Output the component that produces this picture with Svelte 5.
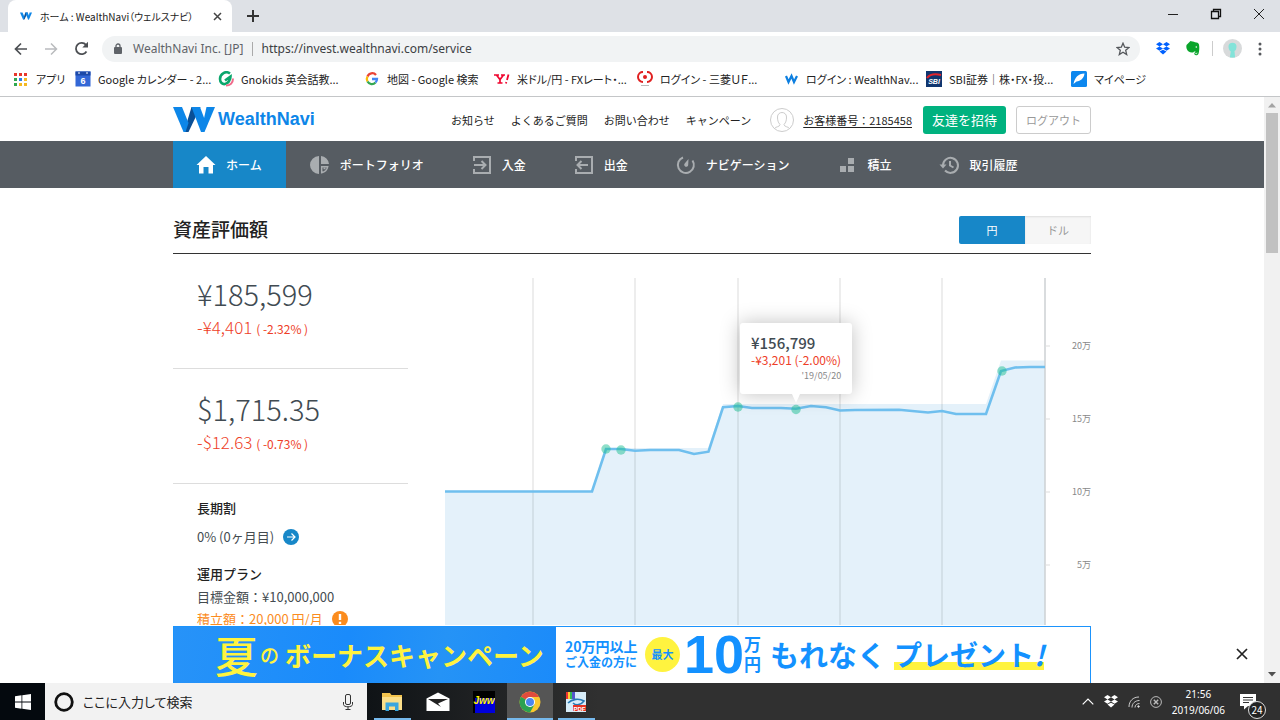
<script>
  let currency = $state('yen');

  const bookmarks = [
    { icon: 'apps', label: 'アプリ' },
    { icon: 'calendar', label: 'Google カレンダー - 2...' },
    { icon: 'gnokids', label: 'Gnokids 英会話教...' },
    { icon: 'google', label: '地図 - Google 検索' },
    { icon: 'yahoo', label: '米ドル/円 - FXレート・...' },
    { icon: 'mufg', label: 'ログイン - 三菱ＵＦ...' },
    { icon: 'wn', label: 'ログイン : WealthNav...' },
    { icon: 'sbi', label: 'SBI証券｜株・FX・投...' },
    { icon: 'feather', label: 'マイページ' }
  ];

  const menu = [
    { icon: 'home', label: 'ホーム', active: true },
    { icon: 'pie', label: 'ポートフォリオ' },
    { icon: 'in', label: '入金' },
    { icon: 'out', label: '出金' },
    { icon: 'gauge', label: 'ナビゲーション' },
    { icon: 'blocks', label: '積立' },
    { icon: 'history', label: '取引履歴' }
  ];

  const amounts = [
    { total: '¥185,599', diff: '-¥4,401', rate: '( -2.32% )' },
    { total: '$1,715.35', diff: '-$12.63', rate: '( -0.73% )' }
  ];

  // chart data in plot coordinates
  const gridX = [88, 190, 293, 395, 497];
  const ticks = [
    { y: 68, label: '20万' },
    { y: 141, label: '15万' },
    { y: 214, label: '10万' },
    { y: 287, label: '5万' }
  ];
  const value = [
    [0, 213.5], [147, 213.5], [161, 171], [176, 171], [190, 172.7], [205, 172], [234, 172],
    [249, 176], [263.5, 173.7], [278, 129.3], [293, 128], [307, 130], [336, 130], [351, 130.8],
    [366, 128], [381, 129.3], [395, 132.5], [410, 132], [454, 131.8], [483, 134.5], [497, 133],
    [511, 136], [541, 136], [556, 93], [570, 89.5], [585, 89], [600, 89]
  ];
  const principal = [
    [0, 213], [147, 213], [161, 170], [263, 170], [278, 126], [541, 126], [556, 82.5], [600, 82.5]
  ];
  const deposits = [[161, 171], [176, 172], [293, 129], [351, 131.5], [557, 93]];

  const toPoints = (list) => list.map((p) => p.join(',')).join(' ');
</script>

{#snippet wmark()}
  <svg class="wmark" viewBox="0 0 42 25" aria-hidden="true">
    <path d="M18.500 0h9L15.500 25H11z" fill="#0a4f96" />
    <path d="M0 0h9l6.500 16L12.500 25H10.500z" fill="#0d86e8" />
    <path d="M18.500 0h8.500l6 16L30 25h-2z" fill="#0d86e8" />
    <path d="M33.500 0H42L31.500 25H28z" fill="#0d86e8" />
  </svg>
{/snippet}

<div class="window">
  <header class="tabs">
    <div class="tab">
      {@render wmark()}
      <span class="tab-title">ホーム : WealthNavi（ウェルスナビ）</span>
      <button aria-label="タブを閉じる">
        <svg width="9" height="9" viewBox="0 0 9 9"><path d="M1 1l7 7M8 1L1 8" stroke="#444" stroke-width="1.500" /></svg>
      </button>
    </div>
    <button class="new-tab" aria-label="新しいタブ">
      <svg width="12" height="12" viewBox="0 0 12 12"><path d="M6 0v12M0 6h12" stroke="#333" stroke-width="2" /></svg>
    </button>
    <div class="window-buttons">
      <button aria-label="最小化"><svg width="12" height="12" viewBox="0 0 12 12"><path d="M1 6.500h10" stroke="#222" /></svg></button>
      <button aria-label="元に戻す">
        <svg width="12" height="12" viewBox="0 0 12 12"><path d="M1.500 3.500h7v7h-7zM3.500 3.500v-2h7v7h-2" fill="none" stroke="#111" stroke-width="1.300" /></svg>
      </button>
      <button aria-label="閉じる"><svg width="12" height="12" viewBox="0 0 12 12"><path d="M1 1l10 10M11 1L1 11" stroke="#222" /></svg></button>
    </div>
  </header>

  <div class="toolbar">
    <button aria-label="戻る">
      <svg width="14" height="14" viewBox="0 0 14 14"><path d="M13 7H2M7 1.500L1.500 7 7 12.500" fill="none" stroke="#4c4f53" stroke-width="1.700" /></svg>
    </button>
    <button aria-label="進む">
      <svg width="14" height="14" viewBox="0 0 14 14"><path d="M1 7h11M7 1.500L12.500 7 7 12.500" fill="none" stroke="#b9bbbe" stroke-width="1.500" /></svg>
    </button>
    <button aria-label="再読み込み">
      <svg width="15" height="15" viewBox="0 0 15 15"><path d="M12.500 10.500A5.700 5.700 0 1 1 12 3.800" fill="none" stroke="#4c4f53" stroke-width="1.800" /><path d="M14 .8v5.700H8.300z" fill="#4c4f53" /></svg>
    </button>
    <div class="omnibox">
      <svg width="8" height="11" viewBox="0 0 8 11"><rect y="4" width="8" height="7" rx="1" fill="#5f6368" /><path d="M2 4.500V3a2 2 0 0 1 4 0v1.500" fill="none" stroke="#5f6368" stroke-width="1.300" /></svg>
      <span class="site">WealthNavi Inc. [JP]</span>
      <input type="text" aria-label="アドレス" value="https://invest.wealthnavi.com/service" />
      <button aria-label="ブックマークに追加">
        <svg width="14" height="14" viewBox="0 0 14 14"><path d="M7 1.200l1.700 4 4.300.3-3.300 2.800 1 4.200L7 10.200l-3.700 2.300 1-4.200L1 5.500l4.300-.3z" fill="none" stroke="#55585c" stroke-width="1.300" /></svg>
      </button>
    </div>
    <div class="extensions">
      <button aria-label="Dropbox">
        <svg width="14" height="13" viewBox="0 0 14 13" fill="#0061fe"><path d="M3.500 0L7 2.200 3.500 4.400 0 2.200zM10.500 0L14 2.200l-3.500 2.200L7 2.200zM3.500 4.400L7 6.600 3.500 8.800 0 6.600zM10.500 4.400L14 6.600l-3.500 2.200L7 6.600zM3.500 9.600L7 7.700l3.500 1.900L7 12.500z" /></svg>
      </button>
      <button aria-label="Evernote">
        <svg width="14" height="15" viewBox="0 0 14 15"><path d="M4.500 0C5 .5 8 .3 9 1.200c2 .2 3.500.5 4 2.300.6 3 .3 7-.6 9.500-.8 1.500-3.400 1.800-4 .3-.4-1.500.4-2.500 1.800-2.300-1.200-.6-2.200-.8-3 .4-3 .4-5.700-.6-6.700-4.200C.3 6 .2 5 .5 4L4.500 0z" fill="#0aa52b" /><path d="M9.400 12.200c.2.900 1.600.7 1.600-.5" fill="none" stroke="#fff" /><circle cx="10.300" cy="6" r=".8" fill="#fff" /></svg>
      </button>
      <i></i>
      <button aria-label="プロフィール">
        <svg width="19" height="19" viewBox="0 0 19 19"><circle cx="9.500" cy="9.500" r="9.500" fill="#d8dadb" /><path d="M5.500 7c0-4.500 8-4.500 8 0 0 3-.7 4.500-2 5l.6 6.500H6.800l1-6C6 11.500 5.500 9.500 5.500 7z" fill="#83e3d9" /></svg>
      </button>
      <button aria-label="メニュー">
        <svg width="4" height="14" viewBox="0 0 4 14" fill="#55585c"><circle cx="2" cy="2" r="1.500" /><circle cx="2" cy="7" r="1.500" /><circle cx="2" cy="12" r="1.500" /></svg>
      </button>
    </div>
  </div>

  <nav class="bookmarks" aria-label="ブックマーク">
    {#each bookmarks as b}
      <a href="#{b.icon}">
        <svg width="16" height="16" viewBox="0 0 16 16" aria-hidden="true">
          {#if b.icon === 'apps'}
            {#each ['#e8372c', '#e8372c', '#e8372c', '#2fa84f', '#2b7de9', '#f5b921', '#2fa84f', '#f5b921', '#f5b921'] as color, i}
              <rect x={1 + (i % 3) * 5} y={2 + Math.floor(i / 3) * 5} width="3" height="3" fill={color} />
            {/each}
          {:else if b.icon === 'calendar'}
            <rect x=".5" y=".5" width="15" height="15" fill="#3367d6" />
            <path d="M.5.500h15v4H.5z" fill="#1c49a8" /><path d="M3 2h2M11 2h2" stroke="#fff" />
            <text x="8" y="12.500" text-anchor="middle" fill="#fff" font-size="9" font-weight="700">6</text>
          {:else if b.icon === 'gnokids'}
            <path d="M12 2.500C8-.5 2 2.500 2 8c0 3.500 2.500 5.500 5 5 3-.5 5.500-4 5.500-7.500L7 9.500" fill="none" stroke="#0aa66c" stroke-width="2.600" />
            <path d="M8 14.500c4 0 7-2.500 7-7" fill="none" stroke="#f06a8a" stroke-width="2" />
          {:else if b.icon === 'google'}
            <path d="M12 4A5 5 0 0 0 3.500 5.500" fill="none" stroke="#ea4335" stroke-width="2.300" />
            <path d="M3.500 5.500a5 5 0 0 0 0 5" fill="none" stroke="#fbbc05" stroke-width="2.300" />
            <path d="M3.500 10.500a5 5 0 0 0 8 1" fill="none" stroke="#34a853" stroke-width="2.300" />
            <path d="M8 8h5a5 5 0 0 1-1.500 3.500" fill="none" stroke="#4285f4" stroke-width="2.300" />
          {:else if b.icon === 'yahoo'}
            <path d="M0 4h5M7 4h4M2.500 4l3.500 4.500L9.500 4M6 8v4M3.500 12h5" stroke="#f0062f" stroke-width="1.700" fill="none" />
            <path d="M14.500 3.500L13 9M12.300 11l-.3 1.500" stroke="#f0062f" stroke-width="1.800" />
          {:else if b.icon === 'mufg'}
            <circle cx="8" cy="6" r="2" fill="#e02020" />
            <path d="M6 .9a5 5 0 0 0 0 10M10 .9a5 5 0 0 1 0 10" fill="none" stroke="#e02020" stroke-width="2" />
            <path d="M4 14.500h8" stroke="#bbb" />
          {:else if b.icon === 'wn'}
            <path d="M3 5l2.500 6L8.500 5l2.500 6 3-6" fill="none" stroke="#0d7fe0" stroke-width="2.200" />
          {:else if b.icon === 'sbi'}
            <rect width="16" height="16" fill="#10366f" />
            <path d="M1 7C4 3 9 2.500 15 4" fill="none" stroke="#e2232b" stroke-width="2" />
            <text x="8" y="13" text-anchor="middle" fill="#fff" font-size="7" font-weight="700" font-style="italic">SBI</text>
          {:else}
            <rect width="16" height="16" rx="1.500" fill="#0d87ee" />
            <path d="M2.500 13C4 6 7 3 13.500 2.500c-.5 5-4 7.500-8 8z" fill="#fff" />
          {/if}
        </svg>
        <span>{b.label}</span>
      </a>
    {/each}
  </nav>

  <div class="viewport">
    <div class="page">
      <header class="site-header">
        <div class="container">
          <a class="logo" href="#home">{@render wmark()}<span>WealthNavi</span></a>
          <nav class="links">
            <a href="#news">お知らせ</a>
            <a href="#faq">よくあるご質問</a>
            <a href="#contact">お問い合わせ</a>
            <a href="#campaign">キャンペーン</a>
          </nav>
          <a class="user" href="#account">
            <svg width="24" height="24" viewBox="0 0 24 24" fill="none" stroke="#ccc"><circle cx="12" cy="12" r="11.500" /><path d="M4.500 20.500c1-2 5.500-1.500 5.500-4C8 14.500 7.500 12 7.500 9c0-6 9-6 9 0 0 3-.5 5.500-2.500 7.500 0 2.500 4.500 2 5.500 4" /></svg>
            <span>お客様番号：2185458</span>
          </a>
          <button class="invite">友達を招待</button>
          <button class="logout">ログアウト</button>
        </div>
      </header>

      <nav class="menu">
        <div class="container">
          {#each menu as item}
            <a href="#{item.icon}" class:active={item.active}>
              <svg width="18" height="18" viewBox="0 0 18 18" fill="none" stroke="#a9adb0" stroke-width="2" aria-hidden="true">
                {#if item.icon === 'home'}
                  <path d="M9 0l9.500 9H16v8.500h-4.500V11h-5v6.500H2V9H-.5z" fill="#fff" stroke="none" />
                {:else if item.icon === 'pie'}
                  <path d="M8 0v18A9 9 0 0 1 8 0zM10 0a9 9 0 0 1 8 8h-8z" fill="#a9adb0" stroke="none" />
                  <path d="M10.700 10.700h6c-.6 3-3 5.500-6 6zM12.500 12.500h2" stroke-width="1.500" />
                {:else if item.icon === 'in'}
                  <path d="M1 5V1h16v16H1v-4M1 9h11M8.500 5l4 4-4 4" />
                {:else if item.icon === 'out'}
                  <path d="M1 5V1h16v16H1v-4M13 9H3M6.500 5l-4 4 4 4" />
                {:else if item.icon === 'gauge'}
                  <path d="M6 1.500A8 8 0 1 0 15.500 4.500" />
                  <path d="M11.500 3l-.3 6a2 2 0 1 1-3.500-1.500z" fill="#a9adb0" stroke="none" />
                {:else if item.icon === 'blocks'}
                  <path d="M10 2h6v6h-6zM2 10h6v6H2zM10 10h6v6h-6z" fill="#a9adb0" stroke="none" />
                {:else}
                  <path d="M3 9a7.500 7.500 0 1 1 2 5.500M10 5v4.500l3.500 2" />
                  <path d="M-.5 8.500h7L3 12.500z" fill="#a9adb0" stroke="none" />
                {/if}
              </svg>
              {item.label}
            </a>
          {/each}
        </div>
      </nav>

      <main class="container">
        <div class="section-head">
          <h1>資産評価額</h1>
          <div class="toggle">
            <button class:on={currency === 'yen'} onclick={() => (currency = 'yen')}>円</button>
            <button class:on={currency === 'dollar'} onclick={() => (currency = 'dollar')}>ドル</button>
          </div>
        </div>

        <div class="columns">
          <aside>
            {#each amounts as a}
              <section class="amount">
                <p class="total">{a.total}</p>
                <p class="diff">{a.diff} <small>{a.rate}</small></p>
              </section>
            {/each}
            <section class="plan">
              <h2>長期割</h2>
              <p class="discount">
                0% (0ヶ月目)
                <a href="#discount" aria-label="長期割の詳細">
                  <svg width="16" height="16" viewBox="0 0 16 16"><circle cx="8" cy="8" r="8" fill="#1787c8" /><path d="M4 8h8M8.500 4.500L12 8l-3.500 3.500" fill="none" stroke="#fff" stroke-width="1.200" /></svg>
                </a>
              </p>
              <h2>運用プラン</h2>
              <p>目標金額：¥10,000,000</p>
              <p class="monthly">
                積立額：20,000 円/月
                <svg width="16" height="16" viewBox="0 0 16 16"><circle cx="8" cy="8" r="8" fill="#fb8c1e" /><path d="M8 3v6M8 10.800v2.200" stroke="#fff" stroke-width="2.400" /></svg>
              </p>
            </section>
          </aside>

          <div class="chart">
            <svg viewBox="0 0 646 404">
              <polygon points="0,404 {toPoints(principal)} 600,404" fill="#e4f1fa" />
              {#each gridX as x}
                <line x1={x} x2={x} y1="0" y2="404" stroke="#000" stroke-opacity=".14" />
              {/each}
              <line x1="600" x2="600" y1="0" y2="404" stroke="#ccd0d3" stroke-width="1.500" />
              {#each ticks as t}
                <line x1="600" x2="605" y1={t.y} y2={t.y} stroke="#ddd" />
                <text x="646" y={t.y + 3} text-anchor="end">{t.label}</text>
              {/each}
              <polyline points={toPoints(value)} fill="none" stroke="#6fbfee" stroke-width="2.600" />
              {#each deposits as [x, y]}
                <circle cx={x} cy={y} r="4.700" fill="#1fbf93" fill-opacity=".5" />
              {/each}
            </svg>
            <div class="tooltip">
              <strong>¥156,799</strong>
              <span>-¥3,201 (-2.00%)</span>
              <time>'19/05/20</time>
            </div>
          </div>
        </div>
      </main>
    </div>

    <div class="banner-bar">
      <a class="banner" href="#bonus">
        <span class="campaign"><b>夏</b><i>の</i><em>ボーナスキャンペーン</em></span>
        <span class="offer">
          <span class="who"><span>20万円以上</span><small>ご入金の方に</small></span>
          <span class="max">最大</span>
          <span class="ten">10</span>
          <span class="unit"><span>万</span><span>円</span></span>
          <span class="all">もれなく</span>
          <span class="present">プレゼント<i>!</i></span>
        </span>
      </a>
      <button class="banner-close" aria-label="バナーを閉じる">
        <svg width="12" height="12" viewBox="0 0 12 12"><path d="M1 1l10 10M11 1L1 11" stroke="#222" stroke-width="1.700" /></svg>
      </button>
    </div>

    <div class="scrollbar" aria-hidden="true">
      <svg width="8" height="5" viewBox="0 0 8 5"><path d="M4 0l4 4.500H0z" fill="#a3a3a3" /></svg>
      <div class="thumb"></div>
      <svg width="8" height="5" viewBox="0 0 8 5"><path d="M0 0h8L4 4.500z" fill="#505050" /></svg>
    </div>
  </div>

  <footer class="taskbar">
    <button class="start" aria-label="スタート">
      <svg width="16" height="16" viewBox="0 0 16 16" fill="#fff"><path d="M0 2.200L6.500 1.300v6.300H0zM7.300 1.200L16 0v7.600H7.300zM0 8.400h6.500v6.300L0 13.800zM7.300 8.400H16V16l-8.700-1.200z" /></svg>
    </button>
    <div class="search">
      <svg width="20" height="20" viewBox="0 0 20 20"><circle cx="10" cy="10" r="8.300" fill="none" stroke="#111" stroke-width="2.800" /></svg>
      <input type="text" aria-label="検索" placeholder="ここに入力して検索" />
      <svg width="10" height="16" viewBox="0 0 10 16" fill="none" stroke="#333"><rect x="2.500" y=".5" width="5" height="10" rx="1.500" /><path d="M.5 8v2.500c0 3 9 3 9 0V8M5 13v2.500M2.500 15.500h5" /></svg>
    </div>
    <div class="apps">
      <button class="running" aria-label="エクスプローラー">
        <svg width="22" height="20" viewBox="0 0 22 20"><path d="M1 1h8l1.500 2H21v15H1z" fill="#f3c44e" /><path d="M1 5h20v13H1z" fill="#fbdf8a" /><path d="M4.500 19v-8.500h13V19H14v-4.500H8V19z" fill="#3aa6df" /></svg>
      </button>
      <button aria-label="メール">
        <svg width="24" height="20" viewBox="0 0 24 20"><path d="M.5 6.500L12 .5l11.500 6V19H.5z" fill="#fff" /><path d="M2 7h20l-10 4.500 3 3.500z M2 7l9 6z" fill="#222" /></svg>
      </button>
      <button aria-label="Jww">
        <svg width="22" height="22" viewBox="0 0 22 22"><path d="M0 0h22v22H0z" fill="#000" /><path d="M2 7h20v15H2z" fill="#0000dc" /><text x="11" y="13" text-anchor="middle" font-size="10" font-weight="700" font-style="italic" fill="#ffef00">Jww</text></svg>
      </button>
      <button class="running current" aria-label="Chrome">
        <svg width="22" height="22" viewBox="0 0 22 22"><circle cx="11" cy="11" r="10.500" fill="#f9c82d" /><path d="M11 11L1.900 5.800A10.500 10.500 0 0 1 20.100 6H11z" fill="#df4b3d" /><path d="M11 11L1.900 5.800A10.500 10.500 0 0 0 11 21.500l4.500-8z" fill="#2ba152" /><circle cx="11" cy="11" r="5" fill="#fff" /><circle cx="11" cy="11" r="4" fill="#4a86ee" /></svg>
      </button>
      <button class="running" aria-label="PDF">
        <svg width="20" height="20" viewBox="0 0 20 20"><path d="M0 0h20v20H0z" fill="#d7ecf8" /><path d="M0 0h2v7H0z" fill="#e33" /><path d="M2 0h2v7H2z" fill="#fc3" /><path d="M4 0h2v7H4z" fill="#3b5" /><path d="M6 0h3v7H6z" fill="#55c" /><path d="M2 11c4-4 11-5 16-2-3 4-8 5-11 2" fill="none" stroke="#2679b4" stroke-width="1.600" /><path d="M7 13h13v6H7z" fill="#e63423" /><text x="13.500" y="18.500" text-anchor="middle" font-size="6" font-weight="700" fill="#fff">PDF</text></svg>
      </button>
    </div>
    <div class="tray">
      <svg width="12" height="7" viewBox="0 0 12 7"><path d="M.7 6.300L6 1l5.300 5.300" fill="none" stroke="#fff" stroke-width="1.200" /></svg>
      <svg width="14" height="13" viewBox="0 0 14 13" fill="#fff"><path d="M3.500 0L7 2.200 3.500 4.400 0 2.200zM10.500 0L14 2.200l-3.500 2.200L7 2.200zM3.500 4.400L7 6.600 3.500 8.800 0 6.600zM10.500 4.400L14 6.600l-3.500 2.200L7 6.600zM3.500 9.600L7 7.700l3.500 1.900L7 12.500z" /></svg>
      <svg width="12" height="12" viewBox="0 0 12 12" fill="none" stroke="#ccc"><path d="M1 11C1 5 5 1 11 1M4 11.500c0-4 3-7 7.500-7M7 11.500c0-2.500 2-4 4.500-4" /><circle cx="10.500" cy="10.500" r=".8" fill="#fff" /></svg>
      <svg width="12" height="12" viewBox="0 0 12 12" fill="none" stroke="#bbb"><circle cx="6" cy="6" r="5.400" /><path d="M3.800 3.800l4.400 4.400M8.200 3.800L3.800 8.200" stroke-width="1.400" /></svg>
      <div class="clock"><span>21:56</span><span>2019/06/06</span></div>
      <button class="notice" aria-label="通知">
        <svg width="16" height="16" viewBox="0 0 16 16"><path d="M0 0h16v12H8l-4 3.500V12H0z" fill="#fff" /><path d="M3 3.500h10M3 6h10M3 8.500h6" stroke="#333" /></svg>
        <span>24</span>
      </button>
    </div>
  </footer>
</div>

<style>
  :global(body) {
    margin: 0;
  }

  .window {
    display: flex;
    flex-direction: column;
    height: 100vh;
    overflow: hidden;
    background: #fff;
    color: #222;
    font-family: "Noto Sans CJK JP", "Noto Sans", sans-serif;
    font-size: 12px;
  }

  button, input {
    font-family: inherit;
    border: 0;
    padding: 0;
    background: none;
  }

  button {
    display: flex;
    align-items: center;
    justify-content: center;
    cursor: pointer;
  }

  svg {
    display: block;
    flex: none;
  }

  a {
    color: inherit;
    text-decoration: none;
  }

  p, h1, h2 {
    margin: 0;
  }

  /* browser chrome */
  .tabs {
    flex: none;
    display: flex;
    height: 32px;
    padding-left: 8px;
    background: #dee1e6;
  }

  .tab {
    display: flex;
    align-items: center;
    justify-content: space-between;
    gap: 8px;
    width: 224px;
    padding: 0 10px 0 12px;
    box-sizing: border-box;
    border-radius: 8px 8px 0 0;
    background: #fff;
  }

  .tab .wmark {
    width: 12px;
    height: 8px;
  }

  .tab-title {
    margin-right: auto;
    white-space: nowrap;
    font-size: 10px;
    font-feature-settings: "palt";
  }

  .new-tab {
    width: 42px;
  }

  .window-buttons {
    display: flex;
    margin-left: auto;
  }

  .window-buttons button {
    width: 43px;
    padding-bottom: 5px;
  }

  .toolbar {
    flex: none;
    display: flex;
    align-items: center;
    height: 33px;
    padding-left: 6px;
  }

  .toolbar > button {
    width: 30px;
  }

  .omnibox {
    flex: 1;
    display: flex;
    align-items: center;
    height: 26px;
    margin-left: 6px;
    padding: 0 10px 0 12px;
    border-radius: 13px;
    background: #f1f3f4;
    font-family: "Noto Sans", sans-serif;
    color: #5f6368;
  }

  .site {
    margin: 0 9px 0 11px;
    padding-right: 8px;
    border-right: 1px solid #aaa;
    line-height: 14px;
  }

  .omnibox input {
    flex: 1;
    font-size: 12px;
    color: #3c4043;
  }

  .extensions {
    display: flex;
    align-items: center;
    gap: 16px;
    padding: 0 18px 0 16px;
  }

  .extensions i {
    width: 1px;
    height: 15px;
    margin: 0 -6px 0 -4px;
    background: #ccc;
  }

  .bookmarks {
    flex: none;
    display: grid;
    grid-template-columns: 62px 143px 146px 130px 143px 146px 143px 145px 1fr;
    height: 31px;
    padding-left: 13px;
    border-bottom: 1px solid #c4c6c8;
  }

  .bookmarks a {
    display: flex;
    align-items: center;
    gap: 7px;
    min-width: 0;
    padding-bottom: 4px;
    font-size: 11px;
    font-feature-settings: "palt";
    white-space: nowrap;
  }

  .bookmarks text {
    font-family: "Liberation Sans", sans-serif;
  }

  /* page */
  .viewport {
    flex: 1;
    min-height: 0;
    position: relative;
    display: flex;
  }

  .page {
    flex: 1;
    overflow: hidden;
  }

  .container {
    max-width: 918px;
    margin: 0 auto;
  }

  .site-header .container {
    display: flex;
    align-items: center;
    height: 44px;
    padding-top: 1px;
    box-sizing: border-box;
  }

  .logo {
    display: flex;
    align-items: center;
    gap: 3px;
    color: #0d86e8;
    font-family: "Liberation Sans", sans-serif;
    font-size: 18px;
    font-weight: 700;
  }

  .logo .wmark {
    width: 42px;
    height: 25px;
  }

  .links {
    display: flex;
    gap: 16px;
    margin-left: auto;
    font-size: 11px;
  }

  .user {
    display: flex;
    align-items: center;
    gap: 9px;
    margin: 0 11px 0 19px;
  }

  .user span {
    font-size: 11px;
    text-decoration: underline;
    text-underline-offset: 2px;
  }

  .invite, .logout {
    height: 28px;
    border-radius: 3px;
  }

  .invite {
    padding: 0 9px;
    background: #00b27f;
    color: #fff;
    font-size: 13px;
  }

  .logout {
    margin-left: 10px;
    padding: 0 9px;
    border: 1px solid #ccc;
    color: #999;
    font-size: 11px;
  }

  .menu {
    background: #565c62;
    color: #fff;
  }

  .menu .container {
    display: flex;
    gap: 1px;
    height: 47px;
  }

  .menu a {
    display: flex;
    align-items: center;
    gap: 11px;
    padding: 0 24px;
    font-weight: 500;
    white-space: nowrap;
  }

  .menu a.active {
    background: #1787c8;
  }

  .menu svg {
    overflow: visible;
  }

  .section-head {
    display: flex;
    align-items: center;
    justify-content: space-between;
    height: 50px;
    padding-top: 15px;
    border-bottom: 1px solid #333;
  }

  .section-head h1 {
    font-size: 19px;
    font-weight: 500;
  }

  .toggle {
    display: flex;
    padding-top: 4px;
  }

  .toggle button {
    width: 66px;
    height: 28px;
    background: #f6f6f6;
    box-shadow: inset 0 1px 2px #ddd;
    color: #999;
    font-size: 11px;
  }

  .toggle button.on {
    border-radius: 2px 0 0 2px;
    background: #1787c8;
    box-shadow: none;
    color: #fff;
  }

  .columns {
    display: grid;
    grid-template-columns: 235px 1fr;
    gap: 37px;
  }

  .amount {
    height: 95px;
    padding: 19px 0 0 24px;
    border-bottom: 1px solid #ddd;
    font-weight: 300;
  }

  .total {
    color: #414b52;
    font-size: 29px;
    line-height: 40px;
  }

  .diff {
    margin-top: 2px;
    color: #ee3e28;
    font-size: 17px;
    line-height: 24px;
  }

  .diff small {
    font-size: 12px;
    font-weight: 400;
  }

  .plan {
    padding: 12px 0 0 24px;
    color: #444b50;
    font-size: 13px;
    line-height: 22px;
  }

  .plan h2 {
    color: #222;
    font-size: 13px;
    font-weight: 500;
    line-height: 24px;
  }

  .plan p {
    display: flex;
    align-items: center;
    gap: 9px;
  }

  .plan .discount {
    margin: 6px 0 14px;
  }

  .plan .monthly {
    color: #fb8c1e;
  }

  .chart {
    position: relative;
    margin-top: 24px;
  }

  .chart > svg {
    width: 100%;
  }

  .chart text {
    fill: #888;
    font-size: 9px;
  }

  .tooltip {
    position: absolute;
    left: 295px;
    top: 45px;
    display: flex;
    flex-direction: column;
    padding: 10px 11px 11px;
    border-radius: 3px;
    background: #fff;
    box-shadow: 0 0 20px rgba(0, 0, 0, 0.25);
  }

  .tooltip::after {
    content: "";
    position: absolute;
    left: 52px;
    top: 100%;
    border: 4px solid transparent;
    border-top: 9px solid #fff;
    border-bottom: 0;
  }

  .tooltip strong {
    color: #414b52;
    font-size: 15px;
    font-weight: 500;
    line-height: 19px;
  }

  .tooltip span {
    color: #ee3e28;
    font-size: 12px;
    line-height: 16px;
  }

  .tooltip time {
    align-self: flex-end;
    color: #888;
    font-size: 9px;
    line-height: 15px;
  }

  /* fixed campaign banner */
  .banner-bar {
    position: absolute;
    left: 0;
    right: 16px;
    bottom: 0;
    padding-top: 1px;
    background: #fff;
  }

  .banner {
    display: grid;
    grid-template-columns: 382px 1fr;
    max-width: 916px;
    height: 56px;
    margin: 0 auto;
    border: 1px solid #1b93fc;
    border-bottom: 0;
    color: #1391ff;
    font-weight: 700;
    white-space: nowrap;
  }

  .banner i, .banner em {
    font-style: normal;
  }

  .campaign, .offer {
    display: flex;
    align-items: center;
    height: 54px;
    padding-bottom: 2px;
  }

  .campaign {
    padding-left: 41px;
    background: linear-gradient(100deg, #2793f8, #1a8bfb 45%, #2593f6 70%, #1b8bfa);
    color: #fff33f;
  }

  .campaign b {
    font-size: 43px;
    font-weight: 500;
    line-height: 54px;
  }

  .campaign i {
    margin: 0 6px 0 2px;
    font-size: 19px;
    font-weight: 500;
  }

  .campaign em {
    font-size: 26px;
  }

  .offer {
    padding-left: 9px;
  }

  .who {
    display: flex;
    flex-direction: column;
    width: 76px;
    font-size: 14px;
    line-height: 16px;
  }

  .who small {
    font-size: 12px;
  }

  .max {
    width: 35px;
    margin: 0 4px;
    border-radius: 50%;
    background: #fff33f;
    font-size: 11px;
    line-height: 35px;
    text-align: center;
  }

  .ten {
    font-family: "Liberation Sans", sans-serif;
    font-size: 54px;
    line-height: 54px;
  }

  .unit {
    display: flex;
    flex-direction: column;
    font-size: 17px;
    line-height: 20px;
  }

  .all {
    margin: 0 8px 0 9px;
    font-size: 29px;
  }

  .present {
    background: linear-gradient(#fff33f, #fff33f) 0 27px / 100% 8px no-repeat;
    font-size: 28px;
    line-height: 38px;
  }

  .present i {
    font-style: italic;
  }

  .banner-close {
    position: absolute;
    right: 16px;
    top: 23px;
  }

  .scrollbar {
    display: flex;
    flex-direction: column;
    align-items: center;
    width: 16px;
    padding: 6px 0;
    box-sizing: border-box;
    background: #f1f1f1;
  }

  .thumb {
    width: 12px;
    height: 140px;
    margin: 5px 0 auto;
    background: #c1c1c1;
  }

  /* taskbar */
  .taskbar {
    flex: none;
    display: flex;
    height: 37px;
    background: #303030;
  }

  .start {
    width: 45px;
    background: #04090e;
  }

  .search {
    display: flex;
    align-items: center;
    gap: 9px;
    width: 322px;
    padding: 0 14px 0 9px;
    box-sizing: border-box;
    background: #f2f2f2;
  }

  .search input {
    flex: 1;
    min-width: 0;
    font-size: 13px;
    font-feature-settings: "palt";
  }

  .search input::placeholder {
    color: #222;
    opacity: 1;
  }

  .apps {
    display: flex;
    padding-left: 2px;
    background: linear-gradient(90deg, #0f1316, #303030);
  }

  .apps button {
    width: 46px;
    background: linear-gradient(#76b9ed, #76b9ed) center bottom / 0 2px no-repeat;
  }

  .apps .running {
    background-size: 37px 2px;
  }

  .apps .current {
    background-color: #555;
    background-size: 100% 2px;
  }

  .apps text {
    font-family: "Liberation Sans", sans-serif;
  }

  .tray {
    display: flex;
    align-items: center;
    gap: 10px;
    margin-left: auto;
    padding-right: 19px;
    color: #fff;
  }

  .clock {
    display: flex;
    flex-direction: column;
    align-items: center;
    font-family: "Noto Sans", sans-serif;
    font-size: 10px;
    line-height: 16px;
  }

  .notice {
    position: relative;
    width: 26px;
    height: 30px;
    color: #fff;
  }

  .notice span {
    position: absolute;
    right: -5px;
    bottom: -2px;
    width: 16px;
    border: 1px solid #ddd;
    border-radius: 50%;
    background: #222;
    font-size: 10px;
    line-height: 16px;
    text-align: center;
  }
</style>
